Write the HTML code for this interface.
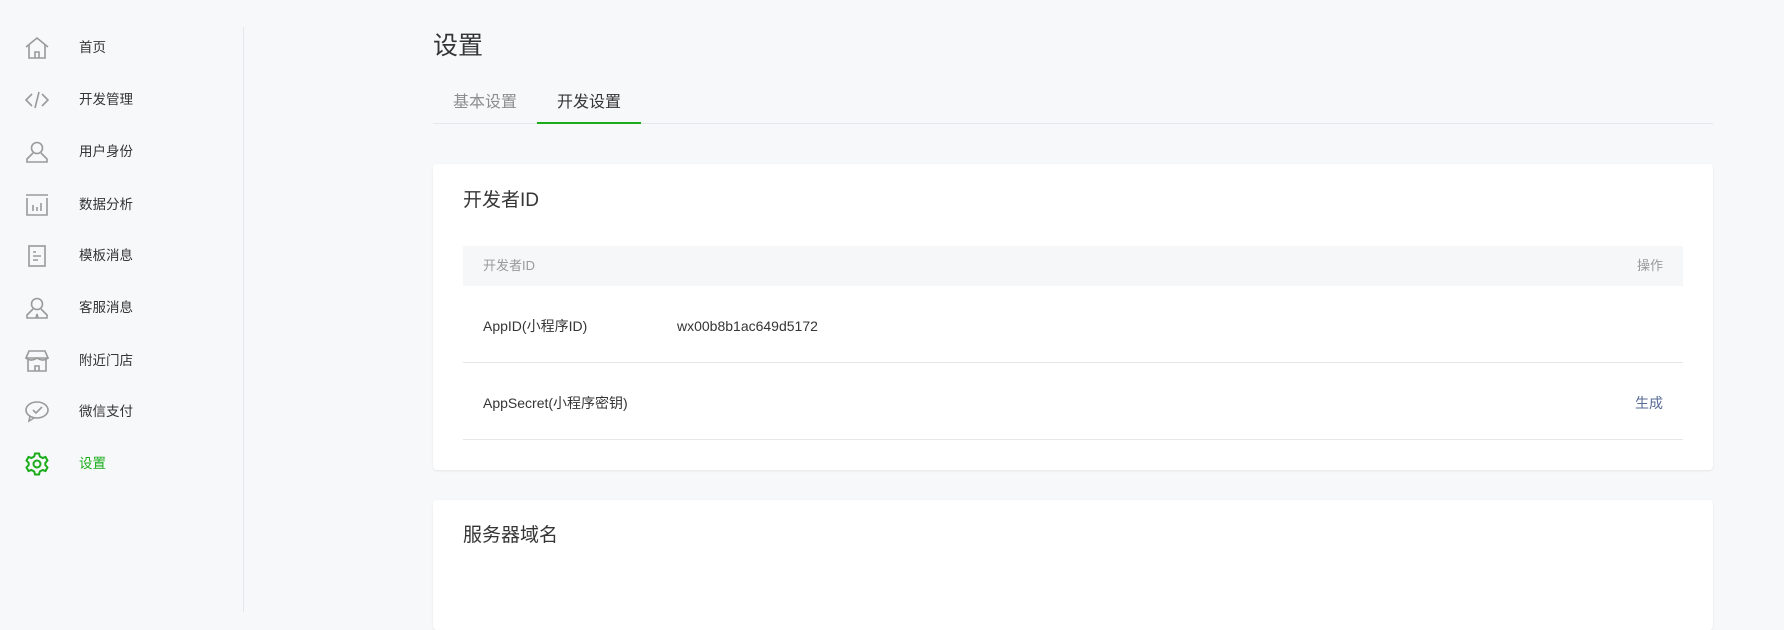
<!DOCTYPE html>
<html><head><meta charset="utf-8"><style>
*{margin:0;padding:0;box-sizing:border-box}
body{width:1784px;height:612px;overflow:hidden;background:#f7f8fa;font-family:"Liberation Sans","Noto Sans CJK SC",sans-serif;color:#353535;position:relative}
.side{position:absolute;left:0;top:0;width:244px;height:612px}
.divider{position:absolute;left:243px;top:27px;width:1px;height:585px;background:#e7e7eb}
.item{position:absolute;left:0;height:30px;width:240px}
.item svg{position:absolute;left:25px;top:3px}
.item span{position:absolute;left:79px;top:6px;font-size:13.5px;line-height:18px;color:#353535}
.item.on span{color:#1aad19}
.abs{position:absolute}
</style></head><body>
<div class="side">
<div class="item" style="top:33px"><svg width="24" height="24" viewBox="0 0 24 24" fill="none" stroke="#9a9a9a" stroke-width="1.6"><path d="M1 11 L12 2 L23 11"/><path d="M4 9 V22 H20 V9"/><path d="M10 22 V16 H14 V22"/></svg><span>首页</span></div>
<div class="item" style="top:85px"><svg width="24" height="24" viewBox="0 0 24 24" fill="none" stroke="#9a9a9a" stroke-width="1.6"><path d="M7 6 L1 12 L7 18"/><path d="M17 6 L23 12 L17 18"/><path d="M14 4 L10 20"/></svg><span>开发管理</span></div>
<div class="item" style="top:137px"><svg width="24" height="24" viewBox="0 0 24 24" fill="none" stroke="#9a9a9a" stroke-width="1.6"><circle cx="12" cy="8" r="5.5"/><path d="M8 13 L2 19 V22 H22 V19 L16 13"/></svg><span>用户身份</span></div>
<div class="item" style="top:190px"><svg width="24" height="24" viewBox="0 0 24 24" fill="none" stroke="#9a9a9a" stroke-width="1.6"><path d="M1 2 H23"/><path d="M2 5 V22 H22 V5"/><path d="M8 12 V18 M12 14 V18 M16 10 V18"/></svg><span>数据分析</span></div>
<div class="item" style="top:241px"><svg width="24" height="24" viewBox="0 0 24 24" fill="none" stroke="#9a9a9a" stroke-width="1.6"><rect x="4" y="2" width="16" height="20"/><path d="M8 8 H11 M8 12 H16 M8 16 H13"/></svg><span>模板消息</span></div>
<div class="item" style="top:293px"><svg width="24" height="24" viewBox="0 0 24 24" fill="none" stroke="#9a9a9a" stroke-width="1.6"><circle cx="12" cy="8" r="5.5"/><path d="M8 13 L2 19 V22 H22 V19 L16 13"/><path d="M11 22 L12 18 L13 22"/></svg><span>客服消息</span></div>
<div class="item" style="top:346px"><svg width="24" height="24" viewBox="0 0 24 24" fill="none" stroke="#9a9a9a" stroke-width="1.6"><path d="M4 2 H20 L23 9 H1 Z"/><path d="M1 9 Q6 13 12 9 Q18 13 23 9"/><path d="M3 11 V22 H21 V11"/><path d="M10 22 V17 H14 V22"/></svg><span>附近门店</span></div>
<div class="item" style="top:397px"><svg width="24" height="24" viewBox="0 0 24 24" fill="none" stroke="#9a9a9a" stroke-width="1.6"><ellipse cx="12" cy="10" rx="11" ry="8"/><path d="M5 16 L4 21 L9 18"/><path d="M8 10 L11 13 L17 7"/></svg><span>微信支付</span></div>
<div class="item on" style="top:449px"><svg width="24" height="24" viewBox="0 0 24 24" fill="none" stroke="#1aad19" stroke-width="2"><path d="M10 1.5 H14 L14.8 4.5 L17.5 6 L20.5 5 L22.5 8.5 L20.3 11 V13 L22.5 15.5 L20.5 19 L17.5 18 L14.8 19.5 L14 22.5 H10 L9.2 19.5 L6.5 18 L3.5 19 L1.5 15.5 L3.7 13 V11 L1.5 8.5 L3.5 5 L6.5 6 L9.2 4.5 Z"/><circle cx="12" cy="12" r="3.5"/></svg><span>设置</span></div>
</div>
<div class="divider"></div>

<div class="abs" style="left:433px;top:30px;font-size:25px;line-height:32px;color:#353535">设置</div>
<div class="abs" style="left:453px;top:92px;font-size:16px;line-height:22px;color:#8d8d8d">基本设置</div>
<div class="abs" style="left:557px;top:92px;font-size:16px;line-height:22px;color:#353535">开发设置</div>
<div class="abs" style="left:433px;top:123px;width:1280px;height:1px;background:#e7e7eb"></div>
<div class="abs" style="left:537px;top:122px;width:104px;height:2px;background:#1aad19"></div>

<div class="abs" style="left:433px;top:164px;width:1280px;height:306px;background:#fff;border-radius:4px;box-shadow:0 1px 2px rgba(0,0,0,.08)">
 <div class="abs" style="left:30px;top:24px;font-size:19px;line-height:26px;color:#353535">开发者ID</div>
 <div class="abs" style="left:30px;top:82px;width:1220px;height:40px;background:#f6f7f9"></div>
 <div class="abs" style="left:50px;top:93px;font-size:13px;line-height:18px;color:#9a9a9a">开发者ID</div>
 <div class="abs" style="right:50px;top:93px;font-size:13px;line-height:18px;color:#9a9a9a">操作</div>
 <div class="abs" style="left:50px;top:152px;font-size:14px;line-height:20px">AppID(小程序ID)</div>
 <div class="abs" style="left:244px;top:152px;font-size:14px;line-height:20px">wx00b8b1ac649d5172</div>
 <div class="abs" style="left:30px;top:198px;width:1220px;height:1px;background:#e7e7eb"></div>
 <div class="abs" style="left:50px;top:229px;font-size:14px;line-height:20px">AppSecret(小程序密钥)</div>
 <div class="abs" style="right:50px;top:229px;font-size:14px;line-height:20px;color:#576b95">生成</div>
 <div class="abs" style="left:30px;top:275px;width:1220px;height:1px;background:#e7e7eb"></div>
</div>

<div class="abs" style="left:433px;top:500px;width:1280px;height:130px;background:#fff;border-radius:4px;box-shadow:0 1px 2px rgba(0,0,0,.08)">
 <div class="abs" style="left:30px;top:23px;font-size:19px;line-height:26px;color:#353535">服务器域名</div>
</div>
</body></html>
